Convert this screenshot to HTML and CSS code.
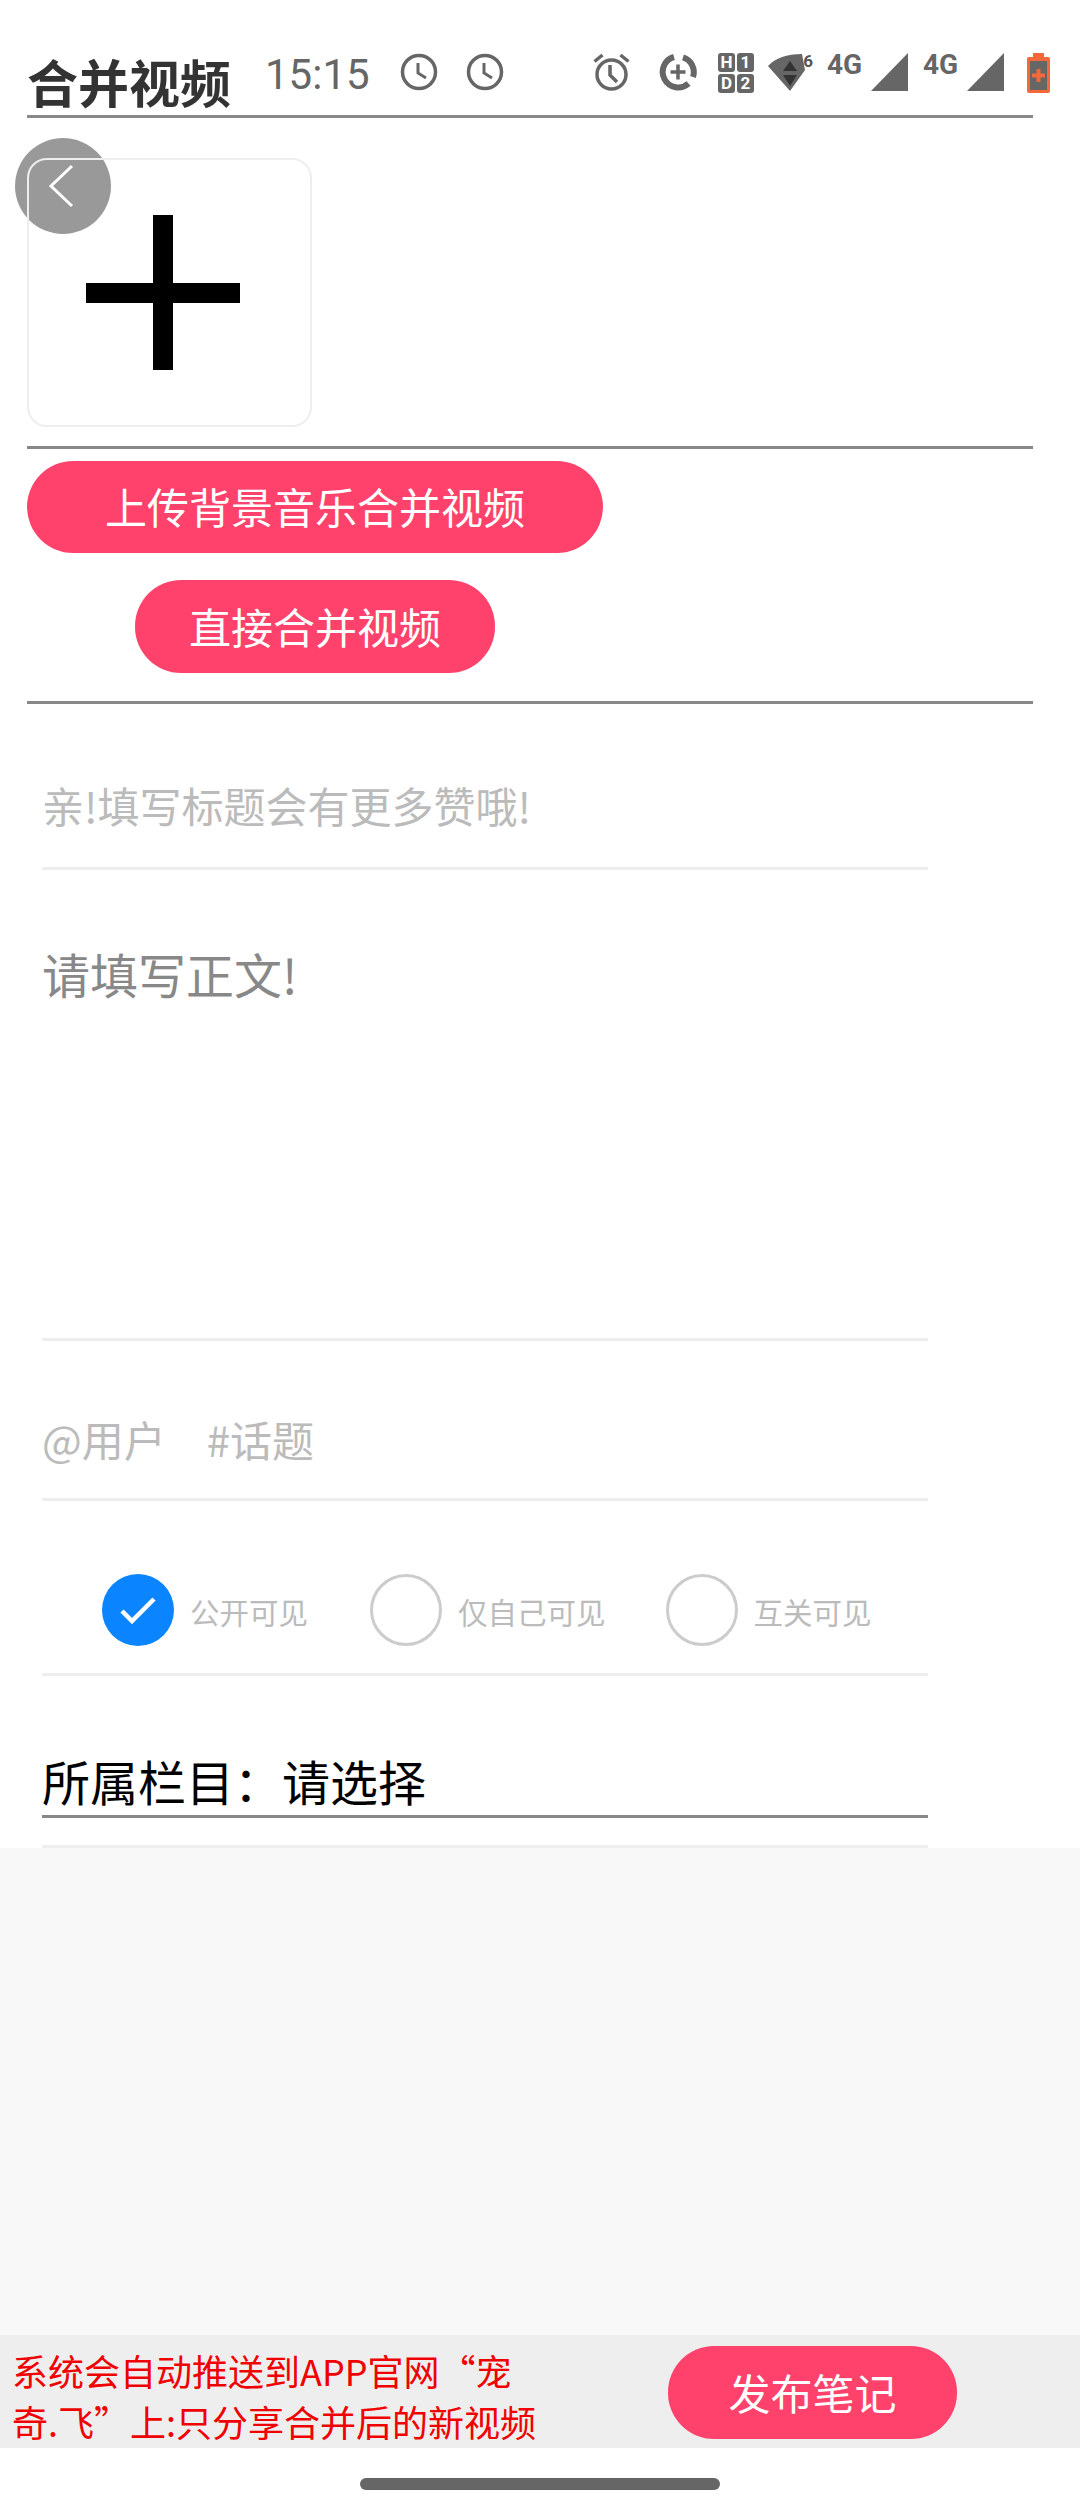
FILE: index.html
```html
<!DOCTYPE html>
<html lang="zh-CN">
<head>
  <meta charset="UTF-8" />
  <title>合并视频</title>
  <link rel="stylesheet" href="styles.css">
</head>
<body>
  <div class="page">
    <!-- 状态栏 -->
    <div class="status-bar">
      <span class="time">15:15</span>
      <svg class="ic clock clock-1" viewBox="0 0 38 38"><circle cx="19" cy="19" r="16.500" fill="none" stroke="#666" stroke-width="3.500"/><path d="M18 10v10l8 5" fill="none" stroke="#666" stroke-width="3"/></svg>
      <svg class="ic clock clock-2" viewBox="0 0 38 38"><circle cx="19" cy="19" r="16.500" fill="none" stroke="#666" stroke-width="3.500"/><path d="M18 10v10l8 5" fill="none" stroke="#666" stroke-width="3"/></svg>
      <svg class="ic alarm" viewBox="0 0 37 38"><circle cx="18.500" cy="21.500" r="14.500" fill="none" stroke="#666" stroke-width="3.500"/><path d="M17 12v10l7 7M1.500 8.500l8-6.500M35.500 8.500l-8-6.500" fill="none" stroke="#666" stroke-width="3.500"/></svg>
      <svg class="ic saver" viewBox="0 0 38 38"><path d="M24 4.300A15.500 15.500 0 0 1 34 24M29.500 30.500A15.500 15.500 0 1 1 15 4" fill="none" stroke="#666" stroke-width="6"/><path d="M19 11.500v15M11.500 19h15" fill="none" stroke="#666" stroke-width="3.500"/></svg>
      <div class="ic hd"><span>H</span><span>1</span><span>D</span><span>2</span></div>
      <div class="ic wifi">
        <svg viewBox="0 0 44 38"><path d="M0 13Q11 1 34 1L37 17L22 38Z" fill="#666"/><path d="M22 8l7 10H15zM22 33l-7-11h14z" fill="#333"/></svg>
        <span>6</span>
      </div>
      <span class="net net-1">4G</span>
      <svg class="ic signal signal-1" viewBox="0 0 37 38"><path d="M37 0V38H0Z" fill="#666"/></svg>
      <span class="net net-2">4G</span>
      <svg class="ic signal signal-2" viewBox="0 0 37 38"><path d="M37 0V38H0Z" fill="#666"/></svg>
      <svg class="ic battery" viewBox="0 0 23 40"><path d="M6 0h11v4h4q2 0 2 2v32q0 2-2 2H2q-2 0-2-2V6q0-2 2-2h4z" fill="#f4683a"/><rect x="3" y="8" width="17" height="29" fill="#666"/><path d="M11.500 16v13M5 22.500h13" stroke="#f4683a" stroke-width="4"/></svg>
    </div>

    <button class="back" type="button">
      <svg viewBox="0 0 28 46"><path d="M25 3L4 23l21 20" fill="none" stroke="#fff" stroke-width="3"/></svg>
    </button>

    <div class="head"><h1>合并视频</h1></div>

    <div class="picker">
      <div class="add-box"><i class="plus-h"></i><i class="plus-v"></i></div>
    </div>

    <div class="actions">
      <button class="btn btn-upload" type="button">上传背景音乐合并视频</button>
      <button class="btn btn-direct" type="button">直接合并视频</button>
    </div>

    <div class="form">
      <div class="row row-title">亲!填写标题会有更多赞哦!</div>
      <div class="row row-body">请填写正文!</div>
      <div class="row row-tags"><span>@用户</span><span>#话题</span></div>
      <div class="row row-scope">
        <div class="radio radio-public"><i class="dot on"><svg viewBox="0 0 38 30"><path d="M3 16l10 10L35 4" fill="none" stroke="#fff" stroke-width="4.500"/></svg></i><span>公开可见</span></div>
        <div class="radio radio-self"><i class="dot"></i><span>仅自己可见</span></div>
        <div class="radio radio-mutual"><i class="dot"></i><span>互关可见</span></div>
      </div>
      <div class="row row-column"><div class="column-select">所属栏目：请选择</div></div>
    </div>

    <div class="blank"></div>

    <div class="foot">
      <p class="notice">系统会自动推送到APP官网“宠<br>奇.飞”上:只分享合并后的新视频</p>
      <button class="btn btn-publish" type="button">发布笔记</button>
    </div>

    <div class="nav-area"><div class="home-bar"></div></div>
  </div>
</body>
</html>
```

FILE: styles.css
```css
* {
  box-sizing: border-box;
  font-family: "Noto Sans CJK SC", "Noto Sans", sans-serif;
}

body {
  margin: 0;
  background: #fff;
}

.page {
  position: relative;
  width: 1080px;
  height: 2520px;
  display: flex;
  flex-direction: column;
  overflow: hidden;
}

/* 状态栏盖在标题上面 */
.status-bar {
  position: absolute;
  top: 53px;
  left: 265px;
  display: flex;
  align-items: flex-start;
}

.time {
  width: 105px;
  margin-top: 1px;
  font-family: Roboto, sans-serif;
  font-size: 42px;
  line-height: 42px;
  color: #666;
}

.ic { display: block; height: 38px; }
.clock { width: 38px; }
.clock-1 { margin-left: 30px; }
.clock-2 { margin-left: 28px; }
.alarm { width: 37px; margin-left: 89px; }
.saver { width: 38px; margin-left: 29px; }

.hd {
  width: 36px;
  height: 40px;
  margin-left: 21px;
  display: grid;
  grid-template-columns: 1fr 1fr;
  grid-template-rows: 1fr 1fr;
  gap: 2px;
}

.hd span {
  background: #666;
  border-radius: 3px;
  color: #fff;
  font-family: Roboto, sans-serif;
  font-size: 17px;
  font-weight: 700;
  line-height: 19px;
  text-align: center;
}

.wifi {
  position: relative;
  width: 44px;
  margin-left: 14px;
}

.wifi svg { display: block; width: 44px; height: 38px; }

.wifi span {
  position: absolute;
  top: -1px;
  right: -1px;
  font-family: Roboto, sans-serif;
  font-size: 17px;
  font-weight: 700;
  line-height: 18px;
  color: #555;
}

.net {
  width: 36px;
  font-family: Roboto, sans-serif;
  font-size: 28px;
  font-weight: 700;
  line-height: 24px;
  white-space: nowrap;
  color: #666;
}

.net-1 { margin-left: 15px; }
.net-2 { margin-left: 15px; }
.signal { width: 37px; }
.signal-1 { margin-left: 8px; }
.signal-2 { margin-left: 8px; }
.battery { width: 23px; height: 40px; margin-left: 23px; }

/* 返回按钮 */
.back {
  position: absolute;
  top: 138px;
  left: 15px;
  width: 96px;
  height: 96px;
  padding: 0;
  border: none;
  border-radius: 50%;
  background: rgba(128, 128, 128, 0.8);
  display: flex;
  align-items: center;
  justify-content: center;
}

.back svg { width: 28px; height: 46px; margin-right: 4px; }

.head {
  height: 118px;
  margin: 0 47px 0 27px;
  padding-top: 54px;
  border-bottom: 3px solid #888;
}

h1 {
  margin: 0;
  font-size: 51px;
  line-height: 54px;
  font-weight: 700;
  color: #333;
}

.picker {
  height: 331px;
  margin: 0 47px 0 27px;
  padding-top: 40px;
  border-bottom: 3px solid #888;
}

.add-box {
  position: relative;
  width: 285px;
  height: 269px;
  border: 2px solid #eee;
  border-radius: 20px;
}

.plus-h, .plus-v {
  position: absolute;
  background: #000;
}

.plus-h { left: 57px; top: 123px; width: 154px; height: 20px; }
.plus-v { left: 124px; top: 55px; width: 20px; height: 155px; }

.actions {
  height: 255px;
  margin: 0 47px 0 27px;
  padding-top: 12px;
  border-bottom: 3px solid #888;
}

.btn {
  display: block;
  padding: 0 0 3px;
  border: none;
  border-radius: 46px;
  background: #ff426b;
  color: #fff;
  font-size: 42px;
  text-align: center;
}

.btn-upload { width: 576px; height: 92px; }
.btn-direct { width: 360px; height: 93px; margin: 27px 0 0 108px; }

.form {
  width: 886px;
  margin-left: 42px;
  padding-top: 1px;
}

.row {
  border-bottom: 3px solid #eee;
  color: #bbb;
}

.row-title {
  height: 165px;
  padding-top: 70px;
  font-size: 42px;
  line-height: 60px;
}

.row-body {
  height: 471px;
  padding-top: 68px;
  font-size: 48px;
  line-height: 70px;
  color: #888;
}

.row-tags {
  height: 160px;
  padding-top: 68px;
  display: flex;
  gap: 41px;
  font-size: 42px;
  line-height: 60px;
}

.row-scope {
  height: 175px;
  padding-top: 73px;
  display: flex;
  align-items: flex-start;
}

.radio {
  display: flex;
  align-items: center;
  gap: 16px;
  font-size: 29.500px;
  line-height: 40px;
  color: #bbb;
}

.radio span { margin-top: 2px; }
.radio-public { margin-left: 60px; }
.radio-self { margin-left: 62px; }
.radio-mutual { margin-left: 60px; }

.dot {
  width: 72px;
  height: 72px;
  border: 3px solid #ccc;
  border-radius: 50%;
  display: flex;
  align-items: center;
  justify-content: center;
}

.dot.on {
  border: none;
  background: #0a84ff;
}

.dot svg { width: 38px; height: 30px; }

.row-column {
  height: 172px;
  padding-top: 77px;
}

.column-select {
  height: 65px;
  border-bottom: 3px solid #888;
  color: #000;
  font-size: 48px;
  line-height: 54px;
}

.blank {
  flex: 1;
  background: #f8f8f8;
}

.foot {
  height: 113px;
  padding: 11px 123px 0 12px;
  background: #eee;
  display: flex;
  justify-content: space-between;
}

.notice {
  margin: -1px 0 0;
  color: #f00000;
  font-size: 36px;
  line-height: 51px;
}

.btn-publish { width: 289px; height: 93px; }

.nav-area {
  height: 72px;
  padding-top: 30px;
}

.home-bar {
  width: 360px;
  height: 12px;
  margin: 0 auto;
  border-radius: 6px;
  background: #666;
}
```
